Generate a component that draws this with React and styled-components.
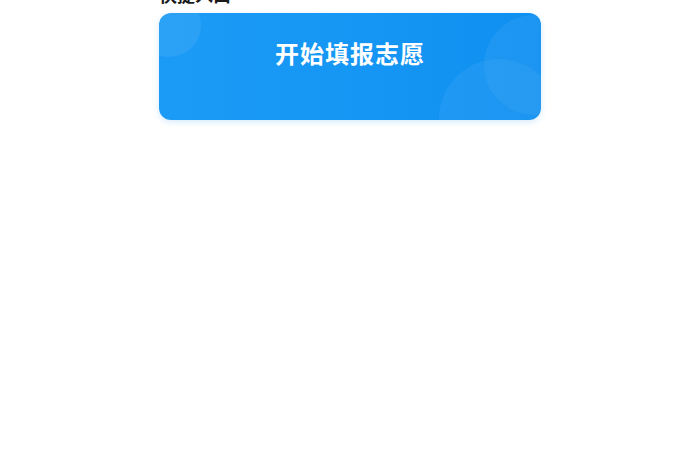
import React from 'react'
import styled, { createGlobalStyle } from 'styled-components'

const GlobalStyle = createGlobalStyle`
  html, body {
    margin: 0;
    padding: 0;
    background: #ffffff;
  }
  body {
    font-family: "Noto Sans CJK SC", "Noto Sans", sans-serif;
  }
`

const Page = styled.div`
  width: 700px;
  height: 470px;
  overflow: hidden;
  background: #ffffff;
`

const Section = styled.section`
  width: 382px;
  margin: -18px auto 0;
  display: flex;
  flex-direction: column;
  gap: 6px;
`

const Title = styled.h2`
  margin: 0;
  font-size: 18px;
  line-height: 25px;
  font-weight: 700;
  color: #1a1a1a;
`

const EntryCard = styled.div`
  position: relative;
  height: 107px;
  border-radius: 12px;
  overflow: hidden;
  background: linear-gradient(90deg, #1c9bf6 0%, #1596f4 55%, #0f90f1 100%);
  box-shadow: 0 2px 6px rgba(20, 140, 240, 0.18);
  display: flex;
  justify-content: center;
  padding-top: 24px;
  box-sizing: border-box;
  cursor: pointer;
`

const Bubble = styled.span`
  position: absolute;
  border-radius: 50%;
  background: rgba(255, 255, 255, ${p => p.$alpha});
  width: ${p => p.$size}px;
  height: ${p => p.$size}px;
  left: ${p => p.$x}px;
  top: ${p => p.$y}px;
`

const Label = styled.span`
  position: relative;
  font-size: 24px;
  line-height: 32px;
  height: 32px;
  font-weight: 700;
  color: #ffffff;
  letter-spacing: 1px;
`

export default function App () {
  return (
    <Page>
      <GlobalStyle />
      <Section>
        <Title>快捷入口</Title>
        <EntryCard>
          <Bubble $size={64} $x={-22} $y={-20} $alpha={0.07} />
          <Bubble $size={100} $x={325} $y={2} $alpha={0.05} />
          <Bubble $size={120} $x={280} $y={46} $alpha={0.05} />
          <Label>开始填报志愿</Label>
        </EntryCard>
      </Section>
    </Page>
  )
}
